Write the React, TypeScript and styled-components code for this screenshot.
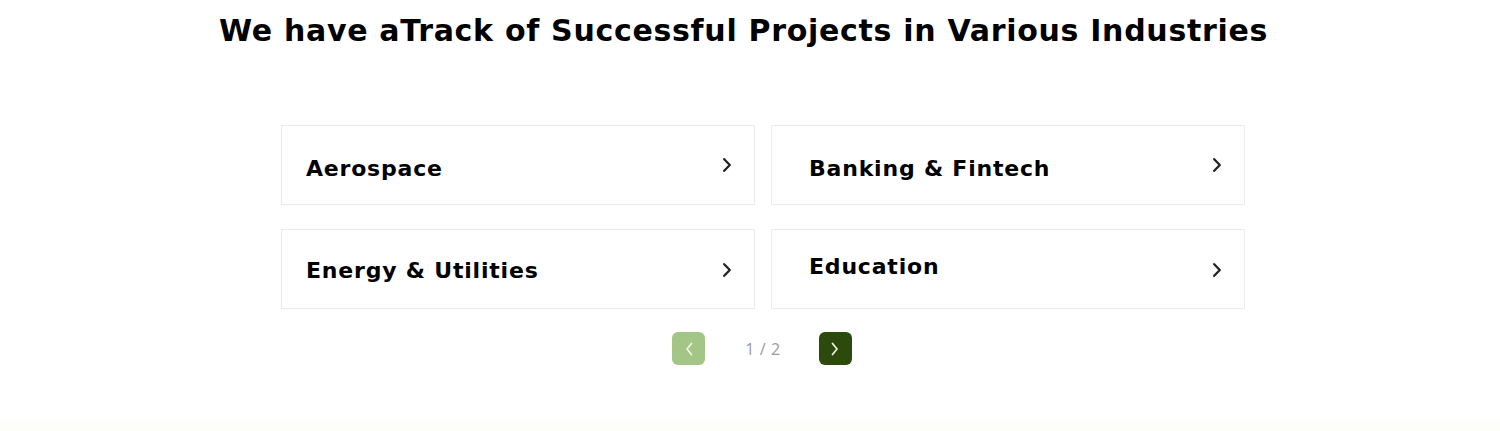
import React from "react";
import styled, { createGlobalStyle } from "styled-components";

const Global = createGlobalStyle`
  html, body { margin: 0; padding: 0; background: #ffffff; }
  body { font-family: "DejaVu Sans", "Noto Sans", sans-serif; }
`;

const Page = styled.section`
  width: 1500px;
  height: 431px;
  background: linear-gradient(to bottom, #ffffff 0, #ffffff 417px, #fdfdf9 421px, #fdfdf9 100%);
  display: flex;
  flex-direction: column;
  box-sizing: border-box;
  padding-top: 12px;
`;

const Heading = styled.h2`
  margin: 0 0 0 219px;
  font-family: "DejaVu Sans", sans-serif;
  font-weight: 700;
  font-size: 30px;
  line-height: 38px;
  letter-spacing: 0.7px;
  color: #000;
  white-space: nowrap;
`;

const Grid = styled.div`
  margin: 75px 0 0 281px;
  width: 964px;
  display: grid;
  grid-template-columns: 474px 474px;
  column-gap: 16px;
  row-gap: 24px;
`;

const Card = styled.a<{ $inset: number }>`
  box-sizing: border-box;
  height: 80px;
  border: 1px solid #ebebeb;
  display: flex;
  align-items: center;
  justify-content: space-between;
  padding: 0 22px 0 ${(p) => p.$inset}px;
  text-decoration: none;
  color: #000;
  background: #fff;
`;

const CardTitle = styled.span<{ $shift: number }>`
  font-family: "DejaVu Sans", sans-serif;
  font-weight: 700;
  font-size: 22px;
  letter-spacing: 0.8px;
  transform: translateY(${(p) => p.$shift}px);
`;

const Chevron = styled.svg<{ $shift: number }>`
  width: 10px;
  height: 16px;
  transform: translateY(${(p) => p.$shift}px);
  flex: none;
`;

const Pager = styled.nav`
  margin: 23px 0 0 672px;
  width: 180px;
  display: flex;
  align-items: center;
  justify-content: space-between;
`;

const PageButton = styled.button<{ $active: boolean }>`
  width: 33px;
  height: 33px;
  border: none;
  border-radius: 6px;
  padding: 0;
  display: flex;
  align-items: center;
  justify-content: center;
  background: ${(p) => (p.$active ? "#2c4a0b" : "#a3c586")};
  cursor: pointer;
`;

const PageCount = styled.span`
  font-family: "Open Sans", sans-serif;
  font-size: 16px;
  color: #9a9aa0;
  letter-spacing: 0.6px;
  padding-left: 2px;
`;

const items = [
  { title: "Aerospace", text: 3, chev: 0, inset: 24 },
  { title: "Banking & Fintech", text: 3, chev: 0, inset: 37 },
  { title: "Energy & Utilities", text: 1, chev: 1, inset: 24 },
  { title: "Education", text: -3, chev: 1, inset: 37 },
];

const ChevronIcon = ({ shift }: { shift: number }) => (
  <Chevron $shift={shift} viewBox="0 0 10 16" fill="none">
    <path d="M2.2 2.2 L7.8 8 L2.2 13.8" stroke="#222" strokeWidth="2.3" strokeLinecap="round" strokeLinejoin="round" />
  </Chevron>
);

export default function App() {
  return (
    <>
      <Global />
      <Page>
        <Heading>We have aTrack of Successful Projects in Various Industries</Heading>
        <Grid>
          {items.map((it) => (
            <Card key={it.title} href="#" $inset={it.inset}>
              <CardTitle $shift={it.text}>{it.title}</CardTitle>
              <ChevronIcon shift={it.chev} />
            </Card>
          ))}
        </Grid>
        <Pager>
          <PageButton $active={false} aria-label="Previous">
            <svg width="10" height="16" viewBox="0 0 10 16" fill="none">
              <path d="M7.5 2.5 L3 8 L7.5 13.5" stroke="#eef5e6" strokeWidth="1.8" strokeLinecap="round" strokeLinejoin="round" />
            </svg>
          </PageButton>
          <PageCount>1 / 2</PageCount>
          <PageButton $active={true} aria-label="Next">
            <svg width="10" height="16" viewBox="0 0 10 16" fill="none">
              <path d="M2.5 2.5 L7 8 L2.5 13.5" stroke="#e8efe0" strokeWidth="1.8" strokeLinecap="round" strokeLinejoin="round" />
            </svg>
          </PageButton>
        </Pager>
      </Page>
    </>
  );
}
